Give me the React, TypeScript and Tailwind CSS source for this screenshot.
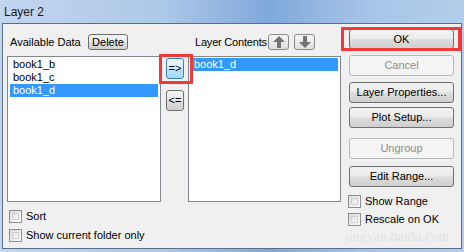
import React from "react";

const font = { fontFamily: '"Liberation Sans", Arial, sans-serif' };

function WinButton({
  label,
  disabled,
  className = "",
}: {
  label: string;
  disabled?: boolean;
  className?: string;
}) {
  return (
    <div
      className={
        "flex items-center justify-center rounded-[3px] border text-[11px] leading-none " +
        (disabled
          ? "border-[#b5b9bc] bg-[#f4f4f4] text-[#8d8d8d] "
          : "border-[#707070] bg-[linear-gradient(#f2f2f2_0%,#ebebeb_48%,#dddddd_52%,#cfcfcf_100%)] text-black ") +
        className
      }
    >
      {label}
    </div>
  );
}

function CheckRow({ label, className = "" }: { label: string; className?: string }) {
  return (
    <div className={"flex h-[13px] items-center text-[11px] leading-none text-black " + className}>
      <div className="h-[13px] w-[13px] border border-[#8e8f8f] bg-[linear-gradient(135deg,#dcdcdc,#fbfbfb)] p-[2px]">
        <div className="h-full w-full border border-[#d0d0d0] bg-[linear-gradient(135deg,#e4e4e4,#f8f8f8)]" />
      </div>
      <span className="ml-[4px]">{label}</span>
    </div>
  );
}

function Arrow({ down }: { down?: boolean }) {
  return (
    <svg width="12" height="12" viewBox="0 0 12 12" className={down ? "rotate-180" : ""}>
      <polygon points="6,0 12,6 8,6 8,12 4,12 4,6 0,6" fill="#747474" />
    </svg>
  );
}

export default function App() {
  const available = ["book1_b", "book1_c", "book1_d"];

  return (
    <div
      className="relative flex h-[252px] w-[464px] flex-col bg-[linear-gradient(90deg,#c2d6ee_0%,#aec8e8_35%,#7fa8da_58%,#a6c3e7_78%,#b4cdeb_100%)]"
      style={font}
    >
      {/* title bar */}
      <div className="flex h-[23px] items-center pl-[4px] text-[12px] text-[#1a1a1a]">Layer 2</div>

      {/* body */}
      <div className="mx-[2px] h-[226px] border border-[#5d6f88] bg-[#f0f0f0]">
        <div className="flex items-start">
          {/* left column */}
          <div className="ml-[4px] w-[154px]">
            <div className="flex h-[32px] items-start pt-[10px]">
              <div className="flex h-[16px] w-[81px] items-center pl-[3px] text-[11px] whitespace-nowrap">
                Available Data
              </div>
              <WinButton label="Delete" className="h-[16px] w-[40px]" />
            </div>
            <div className="h-[146px] border border-[#828790] bg-white px-[2px] pt-[1px]">
              {available.map((item, i) => (
                <div
                  key={item}
                  className={
                    "flex h-[13px] items-center pl-[3px] text-[11px] " +
                    (i === 2 ? "bg-[#3399ff] text-white" : "text-black")
                  }
                >
                  {item}
                </div>
              ))}
            </div>
            <CheckRow label="Sort" className="ml-[2px] mt-[8px]" />
            <CheckRow label="Show current folder only" className="ml-[2px] mt-[6px]" />
          </div>

          {/* middle buttons */}
          <div className="flex w-[27px] flex-col pl-[5px] pt-[34px]">
            <div className="flex h-[21px] w-[18px] items-center justify-center rounded-[3px] border border-[#3c7fb1] bg-[linear-gradient(#eaf6fd_0%,#d9f0fc_48%,#bee6fd_52%,#a7d9f5_100%)] text-[11px]">
              =&gt;
            </div>
            <div className="mt-[11px] flex h-[21px] w-[18px] items-center justify-center rounded-[3px] border border-[#707070] bg-[linear-gradient(#f2f2f2_0%,#ebebeb_48%,#dddddd_52%,#cfcfcf_100%)] text-[11px]">
              &lt;=
            </div>
          </div>

          {/* layer contents */}
          <div className="w-[153px]">
            <div className="flex h-[32px] items-start pt-[10px]">
              <div className="flex h-[16px] w-[80px] items-center pl-[7px] text-[11px] tracking-[-0.2px] whitespace-nowrap">
                Layer Contents
              </div>
              <div className="flex h-[16px] w-[21px] items-center justify-center rounded-[3px] border border-[#8a8a8a] bg-[linear-gradient(#f6f6f6,#dedede)]">
                <Arrow />
              </div>
              <div className="ml-[5px] flex h-[16px] w-[21px] items-center justify-center rounded-[3px] border border-[#8a8a8a] bg-[linear-gradient(#f6f6f6,#dedede)]">
                <Arrow down />
              </div>
            </div>
            <div className="h-[146px] border border-[#828790] bg-white px-[2px] pt-[1px]">
              <div className="flex h-[13px] items-center bg-[#3399ff] pl-[3px] text-[11px] text-white">book1_d</div>
            </div>
          </div>

          {/* right buttons */}
          <div className="ml-[8px] flex w-[105px] flex-col">
            <WinButton label="OK" className="mt-[5px] h-[20px]" />
            <WinButton label="Cancel" disabled className="mt-[6px] h-[21px]" />
            <WinButton label="Layer Properties..." className="mt-[6px] h-[21px]" />
            <WinButton label="Plot Setup..." className="mt-[4px] h-[21px]" />
            <WinButton label="Ungroup" disabled className="mt-[10px] h-[21px]" />
            <WinButton label="Edit Range..." className="mt-[7px] h-[21px]" />
            <CheckRow label="Show Range" className="ml-[-1px] mt-[8px]" />
            <CheckRow label="Rescale on OK" className="ml-[-1px] mt-[5px]" />
          </div>
        </div>
      </div>

      {/* annotation boxes */}
      <div className="absolute left-[341px] top-[27px] h-[24px] w-[120px] border-[3px] border-[#f03a3a]" />
      <div className="absolute left-[159px] top-[54px] h-[30px] w-[34px] border-[3px] border-[#f03a3a]" />

      {/* watermark */}
      <div
        className="pointer-events-none absolute left-[345px] top-[226px] text-[14px] text-[#e2e2e2]"
        style={{ fontFamily: '"Liberation Serif", serif' }}
      >
        jingyan.baidu.com
      </div>
    </div>
  );
}
